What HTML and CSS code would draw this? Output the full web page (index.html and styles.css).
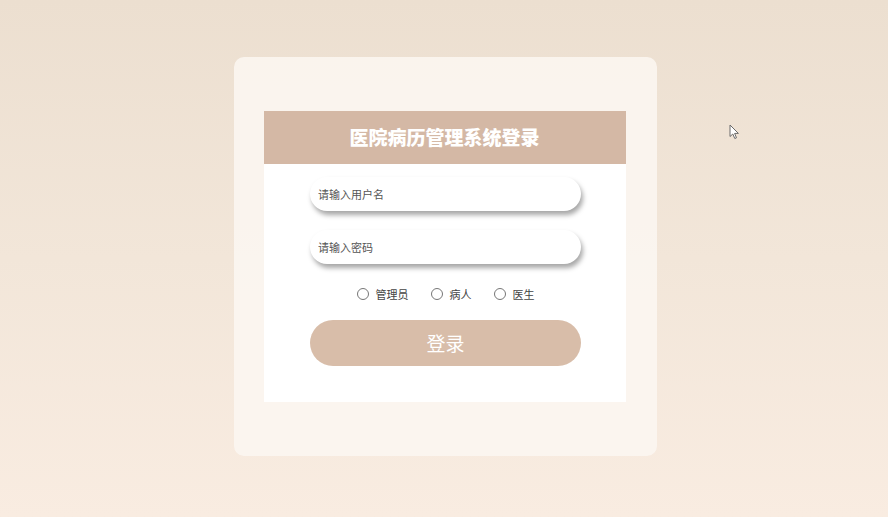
FILE: index.html
```html
<!DOCTYPE html>
<html lang="zh-CN">
<head>
    <meta charset="UTF-8">
    <meta name="viewport" content="width=device-width, initial-scale=1.0">
    <title>医院病历管理系统登录</title>
    <link rel="stylesheet" href="styles.css">
</head>
<body>
    <!-- Login card -->
    <div class="page">
        <div class="card">
            <div class="login-box">
                <h2 class="login-title">医院病历管理系统登录</h2>
                <div class="login-form">
                    <input type="text" class="login-input" placeholder="请输入用户名">
                    <input type="password" class="login-input" placeholder="请输入密码">
                    <div class="role-group">
                        <label class="role"><input type="radio" name="role" value="admin"><span>管理员</span></label>
                        <label class="role"><input type="radio" name="role" value="patient"><span>病人</span></label>
                        <label class="role"><input type="radio" name="role" value="doctor"><span>医生</span></label>
                    </div>
                    <button class="login-btn">登录</button>
                </div>
            </div>
        </div>
    </div>

    <!-- mouse pointer captured in the screenshot -->
    <svg class="cursor" width="12" height="16" viewBox="0 0 12 16">
        <path d="M1 1 L1 12.5 L3.8 10 L5.8 14.5 L7.5 13.8 L5.6 9.4 L9.4 9.4 Z" fill="#fff" stroke="#6a6a6a" stroke-width="1"/>
    </svg>
</body>
</html>
```

FILE: styles.css
```css
* {
    margin: 0;
    padding: 0;
    box-sizing: border-box;
    font-family: "Noto Sans CJK SC", "Noto Sans", sans-serif;
}

html, body {
    height: 100%;
}

body {
    background: linear-gradient(180deg, #ecdfd0 0%, #f2e6d9 50%, #f9ece1 100%);
    overflow: hidden;
    position: relative;
}

.page {
    display: flex;
    justify-content: center;
    padding: 57px 0 0 2px;
}

/* Outer translucent card */
.card {
    width: 423px;
    height: 399px;
    background-color: rgba(252, 247, 242, 0.85);
    border-radius: 10px;
    padding: 54px 31px 0 30px;
}

.login-box {
    background-color: #fff;
    height: 291px;
}

.login-title {
    height: 53px;
    line-height: 51px;
    background-color: #d4b8a5;
    color: #fff;
    text-align: center;
    font-size: 19px;
    font-weight: 900;
}

.login-form {
    display: flex;
    flex-direction: column;
    align-items: center;
    padding: 13px 0 0 2px;
}

.login-input {
    width: 271px;
    height: 34px;
    border: none;
    outline: none;
    border-radius: 17px;
    padding: 0 8px;
    font-size: 11px;
    color: #333;
    background-color: #fff;
    box-shadow: 2px 4px 5px rgba(0, 0, 0, 0.35);
    margin-bottom: 19px;
}

.login-input::placeholder {
    color: #555;
}

.role-group {
    display: flex;
    gap: 22px;
    height: 22px;
    align-items: center;
}

.role {
    display: flex;
    align-items: center;
    font-size: 11px;
    color: #444;
}

.role input {
    width: 12px;
    height: 12px;
    margin: 0 7px 0 0;
}

.login-btn {
    width: 271px;
    height: 46px;
    margin-top: 15px;
    border: none;
    border-radius: 23px;
    background-color: #d8bda9;
    color: #fff;
    font-size: 19px;
    line-height: 44px;
    cursor: pointer;
}

.cursor {
    position: absolute;
    left: 729px;
    top: 124px;
}
```
